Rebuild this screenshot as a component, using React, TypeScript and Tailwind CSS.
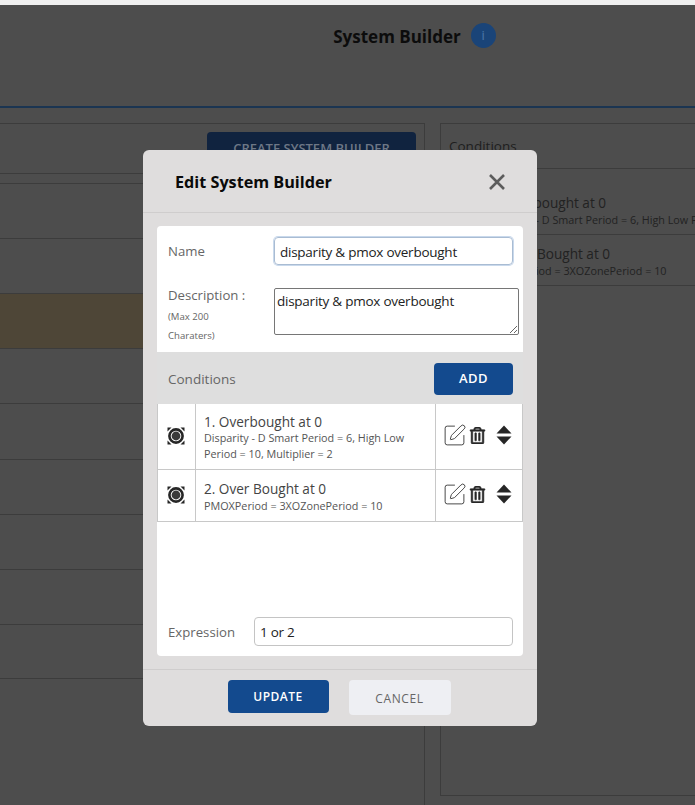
import { SquarePen } from "lucide-react";
import { FaRegTrashAlt } from "react-icons/fa";

const font = { fontFamily: '"Open Sans", "Noto Sans", sans-serif' };

function StatusIcon() {
  return (
    <svg width="18" height="18" viewBox="0 0 18 18" className="shrink-0">
      <circle cx="9" cy="9" r="6.6" fill="#fff" stroke="#262626" strokeWidth="2.6" />
      <circle cx="9" cy="9" r="4.4" fill="#3a3a3a" />
      <path d="M0.5 0.5h4L0.5 4.5zM17.5 0.5h-4L17.5 4.5zM0.5 17.5h4L0.5 13.5zM17.5 17.5h-4L17.5 13.5z" fill="#262626" />
    </svg>
  );
}

function SortIcon() {
  return (
    <svg width="16" height="20" viewBox="0 0 16 20" className="shrink-0">
      <path d="M8 0.5 15.5 8.5H0.5zM8 19.5 0.5 11.5H15.5z" fill="#262626" />
    </svg>
  );
}

function ConditionRow({ title, lines, h, pt, lh }: { title: string; lines: string[]; h: string; pt: string; lh: string }) {
  return (
    <div className={`flex border-b border-[#c8c8c8] ${h}`}>
      <div className="flex w-[38px] shrink-0 items-center justify-center border-r border-[#c8c8c8] pb-[2px] pr-[2px]">
        <StatusIcon />
      </div>
      <div className={`w-[240px] shrink-0 border-r border-[#c8c8c8] pl-2 ${pt}`}>
        <div className={`text-[13.6px] text-[#444] ${lh}`}>{title}</div>
        {lines.map((l) => (
          <div key={l} className="whitespace-nowrap text-[10.8px] leading-[16px] text-[#555]">
            {l}
          </div>
        ))}
      </div>
      <div className="flex flex-1 items-center pb-[3px] pl-[6px]">
        <SquarePen size={25} strokeWidth={0.9} color="#3c3c3c" />
        <FaRegTrashAlt size={17} color="#262626" stroke="#262626" strokeWidth={16} className="ml-[2px]" />
        <div className="ml-[10px]">
          <SortIcon />
        </div>
      </div>
    </div>
  );
}

function BackRow({ tint, h = "h-[55px]" }: { tint?: boolean; h?: string }) {
  return <div className={`${h} shrink-0 border-b border-[#3c3c3c] ${tint ? "bg-[#4e4637]" : ""}`} />;
}

export default function App() {
  return (
    <div className="relative h-[805px] w-[695px] overflow-hidden bg-[#4d4d4d]" style={font}>
      <div className="h-[5px] bg-[#f0f0f0]" />
      {/* page behind the dialog */}
      <div className="flex h-[103px] items-start justify-center border-b-2 border-[#1b3552] pl-[134px] pt-[18px]">
        <span className="text-[17px] font-bold leading-[28px] text-[#0c0c0c]">System Builder</span>
        <span className="ml-[10px] flex h-[25px] w-[25px] items-center justify-center rounded-full bg-[#1a4478] text-[13px] text-[#4d78a8]">
          i
        </span>
      </div>
      <div className="flex pt-[15px]">
        <div className="flex h-[682px] w-[425px] shrink-0 flex-col border-r border-[#3c3c3c]">
          <div className="h-[51px] shrink-0 border-y border-[#3c3c3c] pl-[207px] pt-[8px]">
            <div className="flex h-[40px] w-[209px] justify-center rounded bg-[#10233f] pt-[7px] text-[13px] font-semibold text-[#6d7786]">
              CREATE SYSTEM BUILDER
            </div>
          </div>
          <div className="h-[10px] shrink-0 border-b border-[#3c3c3c]" />
          <BackRow />
          <BackRow />
          <BackRow tint />
          <BackRow />
          <BackRow h="h-[56px]" />
          <BackRow />
          <BackRow />
          <BackRow />
          <div className="flex h-[54px] shrink-0 justify-end border-b border-[#3c3c3c]">
            <div className="w-[123px] border-l border-[#3c3c3c]" />
          </div>
        </div>
        <div className="ml-[15px] h-[673px] flex-1 border-y border-l border-[#3c3c3c]">
          <div className="h-[45px] border-b border-[#3c3c3c] pl-[8px] pt-[12px] text-[13.5px] text-[#1e1e1e]">Conditions</div>
          <div className="mt-[15px] h-[51px] whitespace-nowrap border-b border-[#3c3c3c] pl-[47px] pt-[9px]">
            <div className="text-[13.6px] leading-[19px] text-[#222]">1. Overbought at 0</div>
            <div className="text-[10.8px] leading-[16px] text-[#222]">Disparity - D Smart Period = 6, High Low Period = 10</div>
          </div>
          <div className="h-[51px] whitespace-nowrap border-b border-[#3c3c3c] pl-[47px] pt-[9px]">
            <div className="text-[13.6px] leading-[19px] text-[#222]">2. Over Bought at 0</div>
            <div className="text-[10.8px] leading-[16px] text-[#222]">PMOXPeriod = 3XOZonePeriod = 10</div>
          </div>
        </div>
      </div>

      {/* dialog */}
      <div className="absolute left-[143px] top-[150px] flex h-[576px] w-[394px] flex-col rounded-md bg-[#dfdddd]">
        <div className="flex h-[63px] shrink-0 items-center justify-between border-b border-[#cfcdcd] pl-[32px] pr-[31px]">
          <span className="pt-[3px] text-[16.2px] font-bold text-[#0a0a0a]">Edit System Builder</span>
          <svg width="18" height="18" viewBox="0 0 18 18" className="mt-[1px]">
            <path d="M2 2 16 16M16 2 2 16" stroke="#5c5c5c" strokeWidth="2.6" />
          </svg>
        </div>
        <div className="mx-[14px] mt-[13px] flex h-[430px] flex-col overflow-hidden rounded bg-white">
          <div className="flex h-[126px] shrink-0 flex-col pl-[11px]">
            <div className="flex items-center pt-[11px]">
              <label className="w-[106px] pb-[0px] pt-[2px] text-[13.2px] text-[#666]">Name</label>
              <input
                readOnly
                value="disparity & pmox overbought"
                className="h-[28px] w-[239px] rounded border border-[#a9bcd3] px-[5px] pt-[2px] text-[13.5px] tracking-[-0.25px] text-[#222] shadow-[0_0_0_1px_#c9d9ec] outline-none"
              />
            </div>
            <div className="flex pt-[23px]">
              <div className="w-[106px]">
                <div className="-mt-[2px] pt-[1px] text-[13.2px] leading-[17px] text-[#666]">Description :</div>
                <div className="pt-[3px] text-[9.6px] leading-[19px] text-[#666]">
                  (Max 200
                  <br />
                  Charaters)
                </div>
              </div>
              <textarea
                readOnly
                value="disparity & pmox overbought"
                className="h-[47px] w-[245px] rounded-[2px] border border-[#767676] px-[2px] py-0 text-[13.5px] leading-[24px] tracking-[-0.25px] text-[#222] outline-none"
              />
            </div>
          </div>
          <div className="flex h-[52px] shrink-0 items-center justify-between bg-[#dedede] pl-[11px] pr-[10px]">
            <span className="pt-[2px] text-[13.5px] text-[#666]">Conditions</span>
            <button className="mt-[2px] h-[32px] w-[79px] rounded bg-[#134a8e] text-[13px] font-semibold tracking-[0.5px] text-white">
              ADD
            </button>
          </div>
          <div className="h-[118px] shrink-0 border-x border-[#c8c8c8]">
            <ConditionRow
              h="h-[66px]"
              pt="pt-[9px]"
              lh="leading-[17px]"
              title="1. Overbought at 0"
              lines={["Disparity - D Smart Period = 6, High Low", "Period = 10, Multiplier = 2"]}
            />
            <ConditionRow
              h="h-[52px]"
              pt="pt-[10px]"
              lh="leading-[18px]"
              title="2. Over Bought at 0"
              lines={["PMOXPeriod = 3XOZonePeriod = 10"]}
            />
          </div>
          <div className="flex flex-1 items-end pb-[10px] pl-[11px]">
            <label className="w-[86px] pb-[3px] text-[13.2px] text-[#666]">Expression</label>
            <input
              readOnly
              value="1 or 2"
              className="h-[29px] w-[259px] rounded border border-[#c4c4c4] px-[5px] text-[13.5px] tracking-[-0.25px] text-[#222] outline-none"
            />
          </div>
        </div>
        <div className="mt-[13px] flex flex-1 items-start justify-center gap-5 border-t border-[#cfcdcd] pr-[2px] pt-[10px]">
          <button className="h-[33px] w-[101px] rounded bg-[#134a8e] text-[12px] font-semibold tracking-[0.5px] text-white">
            UPDATE
          </button>
          <button className="h-[35px] w-[102px] rounded bg-[#eeeff3] pt-[2px] text-[12px] font-medium tracking-[0.6px] text-[#666]">
            CANCEL
          </button>
        </div>
      </div>
    </div>
  );
}
